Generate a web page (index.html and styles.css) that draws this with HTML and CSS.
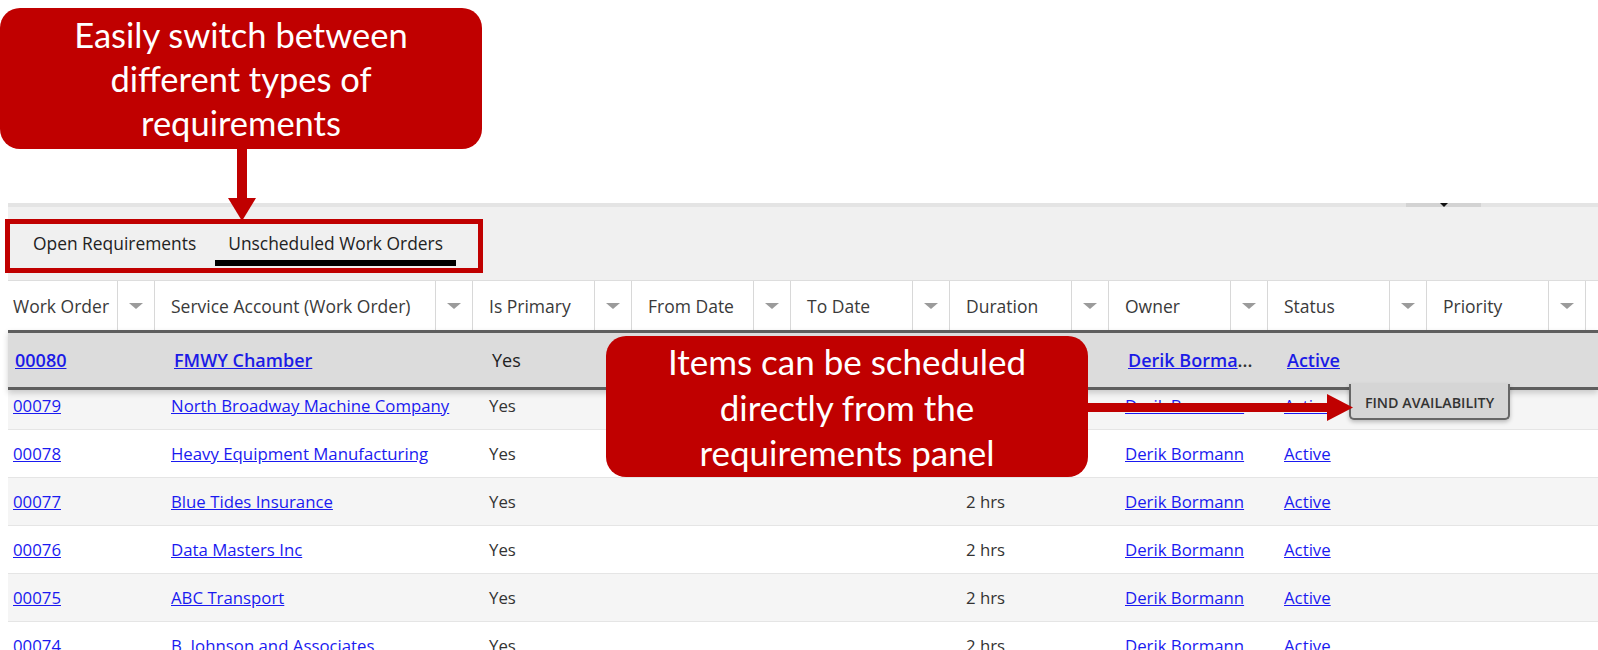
FILE: index.html
```html
<!DOCTYPE html>
<html lang="en">
<head>
<meta charset="utf-8">
<title>Requirements panel</title>
<link rel="stylesheet" href="styles.css">
</head>
<body>
<div class="page">
  <div class="intro">
    <div class="callout callout-top">Easily switch between<br>different types of<br>requirements</div>
  </div>

  <section class="panel">
    <div class="splitter"><span class="handle"><span class="grip"></span></span></div>

    <div class="tabs">
      <div class="tab">Open Requirements</div>
      <div class="tab active">Unscheduled Work Orders</div>
    </div>

    <div class="grid header">
      <div class="hcell first"><span class="label">Work Order</span><span class="dd"></span></div>
      <div class="hcell"><span class="label">Service Account (Work Order)</span><span class="dd"></span></div>
      <div class="hcell"><span class="label">Is Primary</span><span class="dd"></span></div>
      <div class="hcell"><span class="label">From Date</span><span class="dd"></span></div>
      <div class="hcell"><span class="label">To Date</span><span class="dd"></span></div>
      <div class="hcell"><span class="label">Duration</span><span class="dd"></span></div>
      <div class="hcell"><span class="label">Owner</span><span class="dd"></span></div>
      <div class="hcell"><span class="label">Status</span><span class="dd"></span></div>
      <div class="hcell"><span class="label">Priority</span><span class="dd"></span></div>
      <div class="hcell last"><span class="label"></span></div>
    </div>

    <div class="grid row drag">
      <div class="cell first"><a href="#">00080</a></div>
      <div class="cell"><a href="#">FMWY Chamber</a></div>
      <div class="cell plain">Yes</div>
      <div class="cell"></div>
      <div class="cell"></div>
      <div class="cell plain">2 hrs</div>
      <div class="cell"><a href="#">Derik Borma</a><span class="ell">...</span></div>
      <div class="cell"><a href="#">Active</a></div>
      <div class="cell"></div>
      <div class="cell"></div>
      <button class="find">FIND AVAILABILITY</button>
    </div>

    <div class="grid row alt">
      <div class="cell first"><a href="#">00079</a></div>
      <div class="cell"><a href="#">North Broadway Machine Company</a></div>
      <div class="cell">Yes</div>
      <div class="cell"></div>
      <div class="cell"></div>
      <div class="cell">2 hrs</div>
      <div class="cell"><a href="#">Derik Bormann</a></div>
      <div class="cell"><a href="#">Active</a></div>
      <div class="cell"></div>
      <div class="cell"></div>
    </div>
    <div class="grid row">
      <div class="cell first"><a href="#">00078</a></div>
      <div class="cell"><a href="#">Heavy Equipment Manufacturing</a></div>
      <div class="cell">Yes</div>
      <div class="cell"></div>
      <div class="cell"></div>
      <div class="cell">2 hrs</div>
      <div class="cell"><a href="#">Derik Bormann</a></div>
      <div class="cell"><a href="#">Active</a></div>
      <div class="cell"></div>
      <div class="cell"></div>
    </div>
    <div class="grid row alt">
      <div class="cell first"><a href="#">00077</a></div>
      <div class="cell"><a href="#">Blue Tides Insurance</a></div>
      <div class="cell">Yes</div>
      <div class="cell"></div>
      <div class="cell"></div>
      <div class="cell">2 hrs</div>
      <div class="cell"><a href="#">Derik Bormann</a></div>
      <div class="cell"><a href="#">Active</a></div>
      <div class="cell"></div>
      <div class="cell"></div>
    </div>
    <div class="grid row">
      <div class="cell first"><a href="#">00076</a></div>
      <div class="cell"><a href="#">Data Masters Inc</a></div>
      <div class="cell">Yes</div>
      <div class="cell"></div>
      <div class="cell"></div>
      <div class="cell">2 hrs</div>
      <div class="cell"><a href="#">Derik Bormann</a></div>
      <div class="cell"><a href="#">Active</a></div>
      <div class="cell"></div>
      <div class="cell"></div>
    </div>
    <div class="grid row alt">
      <div class="cell first"><a href="#">00075</a></div>
      <div class="cell"><a href="#">ABC Transport</a></div>
      <div class="cell">Yes</div>
      <div class="cell"></div>
      <div class="cell"></div>
      <div class="cell">2 hrs</div>
      <div class="cell"><a href="#">Derik Bormann</a></div>
      <div class="cell"><a href="#">Active</a></div>
      <div class="cell"></div>
      <div class="cell"></div>
    </div>
    <div class="grid row">
      <div class="cell first"><a href="#">00074</a></div>
      <div class="cell"><a href="#">B. Johnson and Associates</a></div>
      <div class="cell">Yes</div>
      <div class="cell"></div>
      <div class="cell"></div>
      <div class="cell">2 hrs</div>
      <div class="cell"><a href="#">Derik Bormann</a></div>
      <div class="cell"><a href="#">Active</a></div>
      <div class="cell"></div>
      <div class="cell"></div>
    </div>
  </section>

  <!-- annotation layer -->
  <svg class="arrow-down" width="28" height="72" viewBox="0 0 28 72" aria-hidden="true">
    <rect x="9" y="0" width="10" height="50" fill="#c00000"/>
    <polygon points="0,49 28,49 14,72" fill="#c00000"/>
  </svg>
  <div class="tab-box"></div>
  <div class="callout callout-side">Items can be scheduled<br>directly from the<br>requirements panel</div>
  <svg class="arrow-right" width="266" height="28" viewBox="0 0 266 28" aria-hidden="true">
    <rect x="0" y="9" width="242" height="9" fill="#c00000"/>
    <polygon points="240,0 266,13.5 240,27" fill="#c00000"/>
  </svg>
</div>
</body>
</html>
```

FILE: styles.css
```css
* { box-sizing: border-box; }

html, body {
  margin: 0;
  padding: 0;
  background: #ffffff;
}

body {
  font-family: "Open Sans", "Noto Sans", sans-serif;
  color: #333333;
}

.page {
  position: relative;
  width: 1598px;
  height: 650px;
  overflow: hidden;
}

/* ---------- callouts ---------- */
.intro {
  height: 203px;
  padding-top: 8px;
}

.callout {
  background: #c00000;
  color: #ffffff;
  font-family: Lato, "Open Sans", sans-serif;
  text-align: center;
  border-radius: 20px;
}

.callout-top {
  width: 482px;
  height: 141px;
  padding-top: 5px;
  font-size: 34.5px;
  line-height: 44px;
}

.callout-side {
  position: absolute;
  left: 606px;
  top: 336px;
  width: 482px;
  height: 141px;
  padding-top: 3px;
  font-size: 35px;
  line-height: 45.5px;
  z-index: 5;
}

.arrow-down {
  position: absolute;
  left: 228px;
  top: 149px;
  z-index: 5;
}

.arrow-right {
  position: absolute;
  left: 1087px;
  top: 394px;
  z-index: 5;
}

.tab-box {
  position: absolute;
  left: 5px;
  top: 219px;
  width: 478px;
  height: 54px;
  border: 5px solid #c00000;
  z-index: 4;
}

/* ---------- panel ---------- */
.panel {
  margin-left: 8px;
  background: #ffffff;
}

.splitter {
  height: 4px;
  background: #e4e4e4;
  display: flex;
}

.handle {
  margin-left: 1398px;
  width: 75px;
  height: 4px;
  background: #d3d3d3;
  display: flex;
  justify-content: center;
}

.grip {
  width: 0;
  height: 0;
  border-left: 4px solid transparent;
  border-right: 4px solid transparent;
  border-top: 4px solid #111111;
}

.tabs {
  background: #f0f0f0;
  display: flex;
  gap: 6px;
  padding: 25px 0 14px 12px;
}

.tab {
  font-size: 17.4px;
  line-height: 22px;
  padding: 0 13px 6px;
  border-bottom: 6px solid transparent;
  color: #222222;
}

.tab.active {
  border-bottom-color: #000000;
}

/* ---------- grid ---------- */
.grid {
  display: grid;
  grid-template-columns: 147px 318px repeat(7, 159px) 1fr;
}

.header {
  height: 50px;
  border-top: 1px solid #dddddd;
  background: #ffffff;
}

.hcell {
  display: flex;
  align-items: stretch;
}

.hcell .label {
  flex: 1;
  display: flex;
  align-items: center;
  padding-left: 16px;
  font-size: 17.5px;
  color: #3a3a3a;
  border-right: 1px solid #d8d8d8;
  white-space: nowrap;
  overflow: hidden;
}

.hcell.first .label { padding-left: 5px; }
.hcell.last .label { border-right: 0; }

.hcell .dd {
  width: 37px;
  border-right: 1px solid #d8d8d8;
  display: flex;
  align-items: center;
  justify-content: center;
}

.hcell .dd::after {
  content: "";
  width: 0;
  height: 0;
  border-left: 7px solid transparent;
  border-right: 7px solid transparent;
  border-top: 6px solid #9b9b9b;
}

.row {
  height: 48px;
  border-bottom: 1px solid #e5e5e5;
  align-items: center;
  font-size: 16.8px;
  background: #ffffff;
}

.row.alt { background: #f5f5f5; }

.cell {
  padding-left: 16px;
  white-space: nowrap;
  color: #333333;
}

.cell.first { padding-left: 5px; }

.cell a {
  color: #1a1af0;
  text-decoration: underline;
}

/* dragged / hovered row */
.row.drag {
  position: relative;
  z-index: 3;
  height: 60px;
  margin-bottom: -8px;
  background: #dcdcdc;
  border-top: 3px solid #5e5e5e;
  border-bottom: 3px solid #5e5e5e;
  box-shadow: 0 3px 6px rgba(0, 0, 0, 0.18);
  font-size: 18px;
}

.row.drag .cell { padding-left: 19px; color: #222222; }
.row.drag .cell.first { padding-left: 7px; }
.row.drag .cell a { color: #1b1be6; font-weight: 600; }
.row.drag .cell.plain { font-weight: 400; }
.row.drag .ell { color: #333333; font-weight: 600; }

.find {
  position: absolute;
  left: 1341px;
  top: 100%;
  margin-top: -3px;
  width: 161px;
  height: 36px;
  padding: 3px 0 0;
  background: #d5d5d5;
  border: 2px solid #666666;
  border-top: 0;
  border-radius: 0 0 5px 5px;
  box-shadow: 0 2px 4px rgba(0, 0, 0, 0.25);
  font-family: "Open Sans", sans-serif;
  font-size: 14.3px;
  font-weight: 600;
  color: #333333;
  white-space: nowrap;
}
```
